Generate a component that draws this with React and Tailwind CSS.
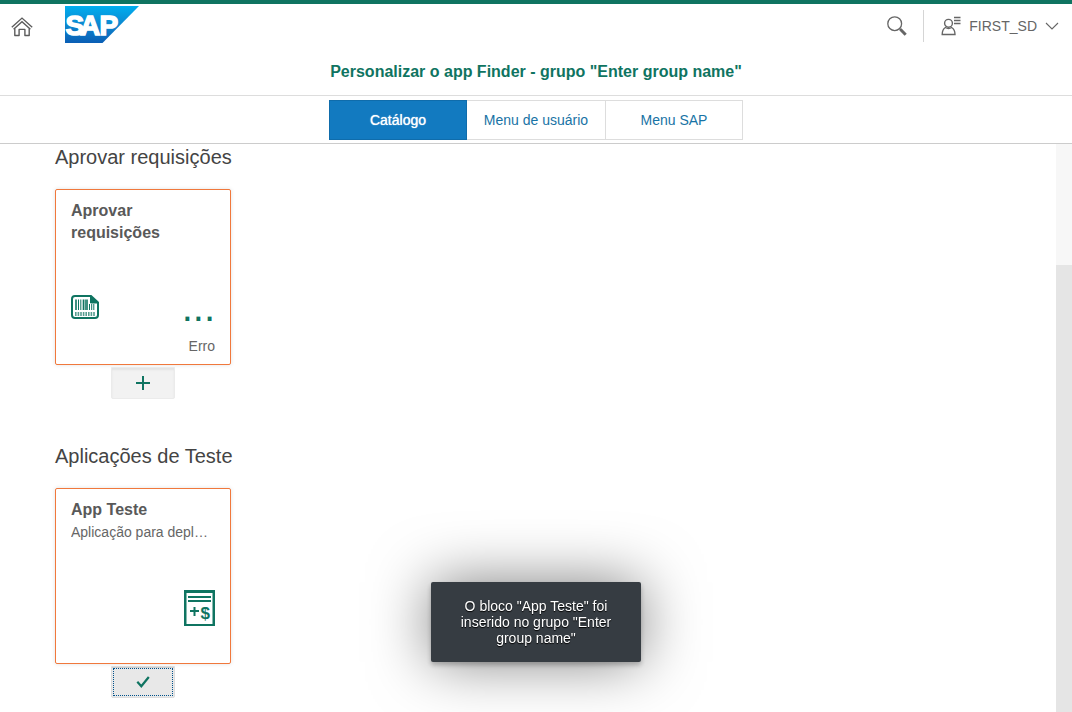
import React from "react";

function HomeIcon() {
  return (
    <svg width="22" height="20" viewBox="0 0 22 20" fill="none" stroke="#5c5c5c" strokeWidth="1.4" aria-hidden="true">
      <path d="M.8 10.3 11 1.1l10.2 9.2" />
      <path d="M2.6 12.3 11 4.8l8.4 7.5" />
      <path d="M3.8 11.500v7h4.300v-6.100h5.800v6.100h4.300v-7" strokeLinejoin="round" />
    </svg>
  );
}

function SapLogo() {
  return (
    <svg width="74" height="37" viewBox="0 0 74 37" role="img" aria-label="SAP">
      <defs>
        <linearGradient id="sap-blue" x1="0" y1="0" x2="0" y2="1">
          <stop offset="0" stopColor="#00aeef" />
          <stop offset="0.5" stopColor="#0d88d0" />
          <stop offset="1" stopColor="#0a5eb5" />
        </linearGradient>
      </defs>
      <path d="M0 0h74L37.500 37H0z" fill="url(#sap-blue)" />
      <text
        x="0.500 15 34.500"
        y="28.500"
        fill="#fff"
        stroke="#fff"
        strokeWidth="1.500"
        className="font-['Liberation_Sans',sans-serif] text-[28px] font-bold"
      >
        SAP
      </text>
    </svg>
  );
}

function SearchIcon() {
  return (
    <svg width="20" height="20" viewBox="0 0 20 20" fill="none" stroke="#666" aria-hidden="true">
      <circle cx="7.700" cy="7.700" r="6.900" strokeWidth="1.3" />
      <path d="m12.500 12.500 1.800 1.800" strokeWidth="1.500" />
      <path d="m13.300 13.300 5.400 5.400" strokeWidth="3" />
    </svg>
  );
}

function UserIcon() {
  return (
    <svg width="20" height="20" viewBox="0 0 20 20" fill="none" stroke="#666" strokeWidth="1.4" aria-hidden="true">
      <circle cx="7.500" cy="7.300" r="3.900" />
      <path d="M1.200 18.500h12.800c0-3.400-1.300-5.700-3.400-7-1.900 1.200-4.300 1.200-6.200 0-2.100 1.300-3.200 3.600-3.200 7z" />
      <path d="M13 1.500h6.500M13 4.500h6.500M13 7.500h6.500" />
    </svg>
  );
}

function ChevronIcon() {
  return (
    <svg width="14" height="8" viewBox="0 0 14 8" fill="none" stroke="#666" strokeWidth="1.1" aria-hidden="true">
      <path d="m1 1 6 6 6-6" />
    </svg>
  );
}

function BarcodeIcon() {
  return (
    <svg width="28" height="24" viewBox="0 0 28 24" fill="none" stroke="#0f7461" aria-hidden="true">
      <path d="M4 1h16l7 6.500V20a3 3 0 0 1-3 3H4a3 3 0 0 1-3-3V4a3 3 0 0 1 3-3z" strokeWidth="2" />
      <path d="M19.500 1v7H27z" fill="#0f7461" strokeWidth="1" />
      <path d="M5 4.500V15M12.500 4.500V15M16 4.500V15" strokeWidth="1.600" />
      <path d="M7.500 4.500V15M9.800 4.500V15M14.300 4.500V15M18.500 9v6M20.700 9v6M22.800 9v6" strokeWidth="1" />
      <path d="M4 19h20.500" strokeWidth="4" strokeDasharray="1.6 1" opacity="0.7" />
    </svg>
  );
}

function BudgetIcon() {
  return (
    <svg width="32" height="36" viewBox="0 0 32 36" aria-hidden="true">
      <path fill="#0f7461" fillRule="evenodd" d="M1 0h31v36H1zM3.500 3v31h26V3z" />
      <path fill="none" stroke="#0f7461" strokeWidth="2" d="M5 7h23M5 11h23" />
      <path fill="none" stroke="#0f7461" strokeWidth="2" d="M7 21h9M11.500 17v9" />
      <text x="17.500" y="28.500" fill="#0f7461" className="font-['Liberation_Sans',sans-serif] text-[17px] font-bold">
        $
      </text>
    </svg>
  );
}

function PlusIcon() {
  return (
    <svg width="14" height="14" viewBox="0 0 14 14" stroke="#0f7461" strokeWidth="2" aria-hidden="true">
      <path d="M0 7h14M7 0v14" />
    </svg>
  );
}

function CheckIcon() {
  return (
    <svg width="14" height="12" viewBox="0 0 14 12" fill="none" stroke="#0f7461" strokeWidth="2.200" aria-hidden="true">
      <path d="m1.300 5.800 4 4.400L12.800 1" />
    </svg>
  );
}

function Tile({ title, subtitle, children }) {
  return (
    <article className="flex h-44 w-44 flex-col rounded-xs border border-[#f0783c] bg-white px-[15px] pt-2.5 shadow-[0_0_4px_rgba(0,0,0,0.12)]">
      <h3 className="text-base leading-[22px] font-bold text-[#595959]">{title}</h3>
      {subtitle && <p className="truncate text-sm leading-[22px] text-[#666]">{subtitle}</p>}
      {children}
    </article>
  );
}

function Section({ heading, tile, action }) {
  return (
    <section>
      <h2 className="text-xl leading-6 text-[#444]">{heading}</h2>
      <div className="mt-5 flex w-44 flex-col items-center gap-0.5">
        {tile}
        {action}
      </div>
    </section>
  );
}

const tab = "h-10 text-center text-sm border";

export default function App() {
  return (
    <div className="flex min-h-screen flex-col bg-white font-['Liberation_Sans',Arial,sans-serif]">
      <header className="border-t-4 border-[#0f7461]">
        <div className="flex h-11 items-center pr-[13px] pl-[11px]">
          <button type="button" aria-label="Início" className="pt-0.5">
            <HomeIcon />
          </button>
          <a href="#home" className="ml-8 flex h-full items-start pt-0.5">
            <SapLogo />
          </a>
          <button type="button" aria-label="Pesquisar" className="ml-auto">
            <SearchIcon />
          </button>
          <div className="ml-4 h-8 w-px bg-[#d5d5d5]" />
          <button type="button" className="ml-[17px] flex items-center text-sm text-[#666]">
            <UserIcon />
            <span className="mr-2 ml-2">FIRST_SD</span>
            <ChevronIcon />
          </button>
        </div>
        <h1 className="flex h-12 items-center justify-center border-b border-[#ddd] text-base font-bold text-[#0f7461]">
          Personalizar o app Finder - grupo "Enter group name"
        </h1>
        <nav className="flex h-12 items-start justify-center border-b border-[#ccc] pt-1" aria-label="Visões">
          <button
            type="button"
            className={`${tab} w-[138px] border-[#0f6cab] bg-[#127ac0] text-white [text-shadow:0_0_1px_#fff]`}
          >
            Catálogo
          </button>
          <button type="button" className={`${tab} w-[139px] border-l-0 border-[#ddd] bg-white text-[#1873a5]`}>
            Menu de usuário
          </button>
          <button type="button" className={`${tab} w-[137px] border-l-0 border-[#ddd] bg-white text-[#1873a5]`}>
            Menu SAP
          </button>
        </nav>
      </header>

      <div className="flex flex-1">
        <main className="flex flex-1 flex-col gap-[45px] px-[55px] pt-px pb-3">
          <Section
            heading="Aprovar requisições"
            tile={
              <Tile title="Aprovar requisições">
                <div className="mt-auto flex h-9 items-end justify-between">
                  <div className="pb-2">
                    <BarcodeIcon />
                  </div>
                  <span className="text-[40px] leading-10 text-[#0f7461]">...</span>
                </div>
                <p className="mt-[9px] mb-2 text-right text-sm leading-5 text-[#666]">Erro</p>
              </Tile>
            }
            action={
              <button
                type="button"
                aria-label="Adicionar bloco"
                className="flex h-8 w-16 items-center justify-center rounded-b-xs border border-[#ebebeb] bg-[#f2f2f2] shadow-[inset_0_2px_2px_#e3e3e3]"
              >
                <PlusIcon />
              </button>
            }
          />
          <Section
            heading="Aplicações de Teste"
            tile={
              <Tile title="App Teste" subtitle="Aplicação para deploy de teste">
                <div className="mt-auto mb-[37px] flex justify-end">
                  <BudgetIcon />
                </div>
              </Tile>
            }
            action={
              <button
                type="button"
                aria-label="Bloco adicionado"
                className="h-8 w-16 rounded-b-xs border border-[#ddd] bg-[#e8e8e8] p-px shadow-[inset_0_1px_0_#ccc]"
              >
                <span className="flex h-full items-center justify-center border border-dotted border-[#00528c]">
                  <CheckIcon />
                </span>
              </button>
            }
          />
        </main>
        <div className="flex w-4 flex-col bg-[#f7f7f7] pt-[121px]" aria-hidden="true">
          <div className="flex-1 bg-[#e5e5e5]" />
        </div>
      </div>

      <div className="pointer-events-none fixed inset-x-0 bottom-[50px] flex justify-center">
        <div
          role="status"
          className="w-[210px] rounded-xs bg-[#363c42] px-6 py-4 text-center text-sm leading-4 text-white shadow-[0_0_60px_rgba(0,0,0,0.5),0_3px_5px_rgba(0,0,0,0.25)] [text-shadow:0_1px_1px_#000]"
        >
          O bloco "App Teste" foi inserido no grupo "Enter group name"
        </div>
      </div>
    </div>
  );
}
